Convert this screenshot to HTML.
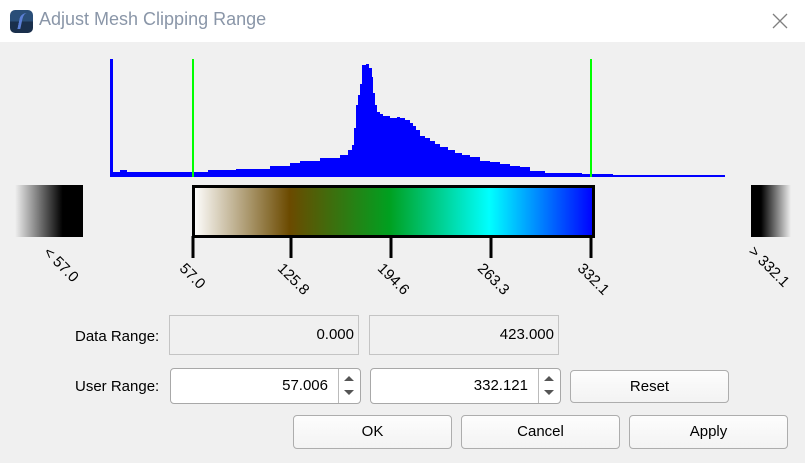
<!DOCTYPE html>
<html><head><style>
body{margin:0;width:805px;height:463px;background:#f0f0f0;font-family:"Segoe UI","Liberation Sans",sans-serif;font-size:15px;position:relative;overflow:hidden;color:#000}
.abs{position:absolute}
.title{left:0;top:0;width:805px;height:42px;background:#fff}
.lbl{transform-origin:0 0;transform:rotate(45deg);font-size:15px;white-space:nowrap}
.fld{position:absolute;box-sizing:border-box;border:1px solid #c4c4c4;background:#f0f0f0;text-align:right;padding-right:4px;line-height:38px}
.inp{position:absolute;box-sizing:border-box;border:1px solid #a8a8a8;background:#fff;border-radius:4px;text-align:right;line-height:34px}
.btn{position:absolute;box-sizing:border-box;border:1px solid #adadad;border-radius:4px;text-align:center;line-height:31px;background:linear-gradient(#fdfdfd,#f3f3f3)}
</style></head><body>
<div class="abs title"></div>
<div class="abs" style="left:10px;top:10px;width:23px;height:23px;border-radius:5px;background:linear-gradient(#2a4e78 50%,#1a2f4c 50%)"></div>
<div class="abs" style="left:19px;top:13px;width:6px;height:16px;border-left:3px solid #5b7fd6;border-radius:8px 0 0 0;transform:skewX(-12deg);box-sizing:border-box"></div>
<div class="abs" style="left:39px;top:9px;font-size:18px;color:#8a96a8">Adjust Mesh Clipping Range</div>
<svg class="abs" style="left:770px;top:11px" width="20" height="20"><path d="M3 3L17 17M17 3L3 17" stroke="#808080" stroke-width="1.3"/></svg>

<svg class="abs" style="left:0;top:0" width="805" height="300">
<polygon fill="#0000ff" points="110,177 110,59 113,59 113,172 120,172 120,170 127,170 127,172 208,172 208,170 236,170 236,169 270,169 270,166 290,166 290,163 300,163 300,161 320,161 320,158 340,158 340,155 348,155 348,150 352,150 352,145 354,145 354,128 356,128 356,105 358,105 358,95 360,95 360,84 362,84 362,65 366,65 366,64 369,64 369,68 372,68 372,77 373,77 373,93 375,93 375,105 377,105 377,112 380,112 380,114 383,114 383,116 390,116 390,118 397,118 397,117 400,117 400,118 405,118 405,120 410,120 410,123 413,123 413,126 416,126 416,130 420,130 420,136 425,136 425,138 430,138 430,141 435,141 435,144 440,144 440,147 448,147 448,150 455,150 455,153 462,153 462,155 470,155 470,157 480,157 480,161 490,161 490,162 500,162 500,164 510,164 510,166 520,166 520,167 530,167 530,171 545,171 545,173 582,173 582,174 613,174 613,175 725,175 725,177"/>
<rect x="192" y="59" width="2" height="118" fill="#00ff00"/>
<rect x="590" y="59" width="2" height="118" fill="#00ff00"/>
<defs>
<linearGradient id="cb" x1="0" x2="1"><stop offset="0" stop-color="#fff"/><stop offset="0.24" stop-color="#6b4a00"/><stop offset="0.49" stop-color="#00a020"/><stop offset="0.74" stop-color="#00ffff"/><stop offset="0.87" stop-color="#0080ff"/><stop offset="1" stop-color="#0000ff"/></linearGradient>
<linearGradient id="lg" x1="0" x2="1"><stop offset="0" stop-color="#f0f0f0"/><stop offset="0.7" stop-color="#000"/></linearGradient>
<linearGradient id="rg" x1="1" x2="0"><stop offset="0" stop-color="#f0f0f0"/><stop offset="0.75" stop-color="#000"/></linearGradient>
</defs>
<rect x="15" y="185" width="68" height="52" fill="url(#lg)"/>
<rect x="751" y="185" width="40" height="52" fill="url(#rg)"/>
<rect x="193.5" y="186.5" width="400" height="50" fill="url(#cb)" stroke="#000" stroke-width="3"/>
<g stroke="#000" stroke-width="3">
<line x1="193" y1="236" x2="193" y2="258"/><line x1="291" y1="236" x2="291" y2="258"/><line x1="391" y1="236" x2="391" y2="258"/><line x1="491" y1="236" x2="491" y2="258"/><line x1="591" y1="236" x2="591" y2="258"/>
</g>
</svg>
<div class="abs lbl" style="left:52px;top:244px">&lt; 57.0</div>
<div class="abs lbl" style="left:188px;top:260px">57.0</div>
<div class="abs lbl" style="left:286px;top:260px">125.8</div>
<div class="abs lbl" style="left:386px;top:260px">194.6</div>
<div class="abs lbl" style="left:486px;top:260px">263.3</div>
<div class="abs lbl" style="left:586px;top:260px">332.1</div>
<div class="abs lbl" style="left:757px;top:243px">&gt; 332.1</div>

<div class="abs" style="left:75px;top:328px">Data Range:</div>
<div class="fld" style="left:169px;top:315px;width:190px;height:40px">0.000</div>
<div class="fld" style="left:369px;top:315px;width:190px;height:40px">423.000</div>
<div class="abs" style="left:75px;top:378px">User Range:</div>
<div class="inp" style="left:170px;top:368px;width:191px;height:36px;padding-right:32px">57.006</div>
<div class="inp" style="left:370px;top:368px;width:191px;height:36px;padding-right:32px">332.121</div>
<div class="abs" style="left:338px;top:369px;width:1px;height:34px;background:#bbb"></div>
<div class="abs" style="left:538px;top:369px;width:1px;height:34px;background:#bbb"></div>
<svg class="abs" style="left:340px;top:370px" width="20" height="32"><path d="M4 11L9 6L14 11Z M4 20L9 25L14 20Z" fill="#555"/></svg>
<svg class="abs" style="left:540px;top:370px" width="20" height="32"><path d="M4 11L9 6L14 11Z M4 20L9 25L14 20Z" fill="#555"/></svg>
<div class="btn" style="left:570px;top:370px;width:159px;height:33px">Reset</div>
<div class="btn" style="left:293px;top:415px;width:159px;height:34px">OK</div>
<div class="btn" style="left:461px;top:415px;width:159px;height:34px">Cancel</div>
<div class="btn" style="left:629px;top:415px;width:159px;height:34px">Apply</div>
</body></html>
